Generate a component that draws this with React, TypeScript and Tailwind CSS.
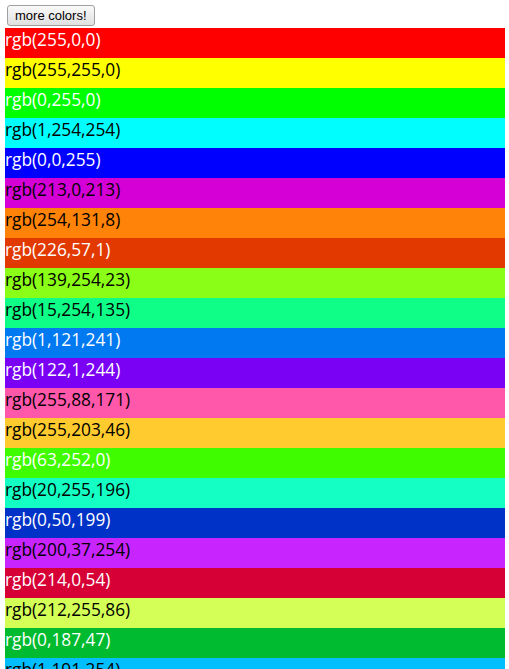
import React from "react";

const colors: [number, number, number, boolean][] = [
  [255, 0, 0, true],
  [255, 255, 0, false],
  [0, 255, 0, true],
  [1, 254, 254, false],
  [0, 0, 255, true],
  [213, 0, 213, false],
  [254, 131, 8, false],
  [226, 57, 1, true],
  [139, 254, 23, false],
  [15, 254, 135, false],
  [1, 121, 241, true],
  [122, 1, 244, true],
  [255, 88, 171, false],
  [255, 203, 46, false],
  [63, 252, 0, true],
  [20, 255, 196, false],
  [0, 50, 199, true],
  [200, 37, 254, false],
  [214, 0, 54, true],
  [212, 255, 86, false],
  [0, 187, 47, true],
  [1, 191, 254, false],
];

export default function App() {
  return (
    <div className="bg-white h-[669px] overflow-hidden px-[5px]">
      <div className="flex pt-[5px] pb-[2px] pl-[2px]">
        <button
          className="h-[21px] px-[7px] text-[13px] leading-none text-black border border-[#a0a0a0] rounded-[3px] bg-gradient-to-b from-[#fafafa] to-[#e0e0e0]"
          style={{ fontFamily: '"Liberation Sans", Arial, sans-serif' }}
        >
          more colors!
        </button>
      </div>
      <div className="w-[500px]">
        {colors.map(([r, g, b, light]) => {
          const s = `rgb(${r},${g},${b})`;
          return (
            <div
              key={s}
              className={`h-[30px] text-[17.3px] leading-[24px] ${light ? "text-white" : "text-black"}`}
              style={{ backgroundColor: s, fontFamily: '"Open Sans", sans-serif' }}
            >
              {s}
            </div>
          );
        })}
      </div>
    </div>
  );
}
